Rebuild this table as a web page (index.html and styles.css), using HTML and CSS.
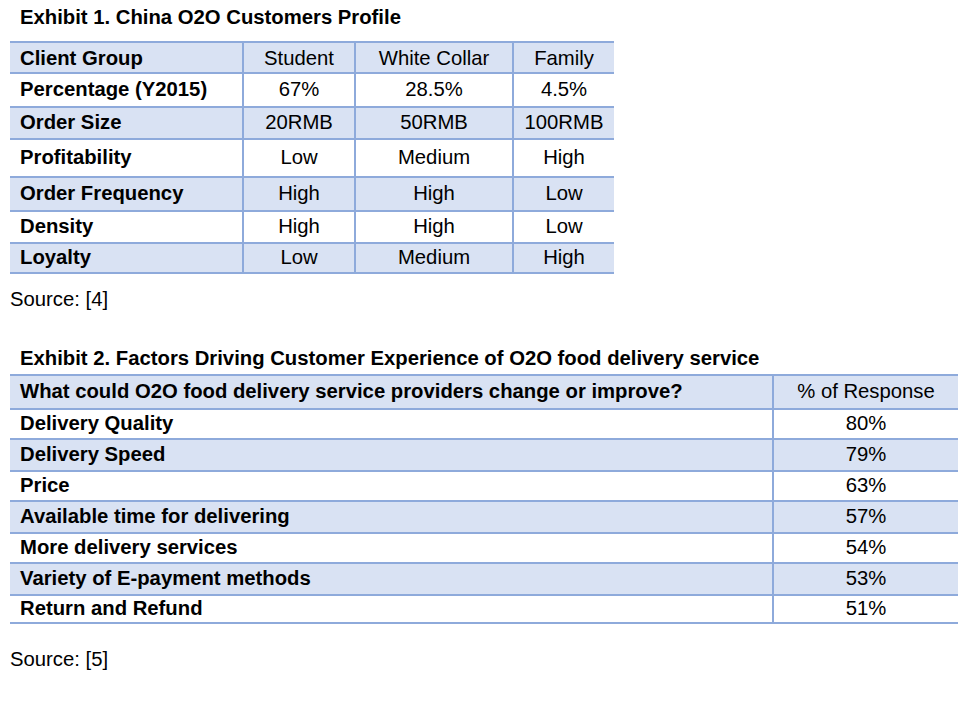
FILE: index.html
```html
<!DOCTYPE html>
<html lang="en">
<head>
<meta charset="utf-8">
<title>China O2O Exhibits</title>
<link rel="stylesheet" href="styles.css">
</head>
<body>
<div class="page">
  <h2 class="exhibit-title t1-title">Exhibit 1. China O2O Customers Profile</h2>
  <table class="grid t1">
    <colgroup>
      <col class="t1-c1"><col class="t1-c2"><col class="t1-c3"><col class="t1-c4">
    </colgroup>
    <tbody>
      <tr class="band h33 first"><th>Client Group</th><td>Student</td><td>White Collar</td><td>Family</td></tr>
      <tr class="h34"><th>Percentage (Y2015)</th><td>67%</td><td>28.5%</td><td>4.5%</td></tr>
      <tr class="band h32"><th>Order Size</th><td>20RMB</td><td>50RMB</td><td>100RMB</td></tr>
      <tr class="h38"><th>Profitability</th><td>Low</td><td>Medium</td><td>High</td></tr>
      <tr class="band h34"><th>Order Frequency</th><td>High</td><td>High</td><td>Low</td></tr>
      <tr class="h32"><th>Density</th><td>High</td><td>High</td><td>Low</td></tr>
      <tr class="band h30"><th>Loyalty</th><td>Low</td><td>Medium</td><td>High</td></tr>
    </tbody>
  </table>
  <p class="source s1">Source: [4]</p>

  <h2 class="exhibit-title t2-title">Exhibit 2. Factors Driving Customer Experience of O2O food delivery service</h2>
  <table class="grid t2">
    <colgroup>
      <col class="t2-c1"><col class="t2-c2">
    </colgroup>
    <tbody>
      <tr class="band h36 first"><th>What could O2O food delivery service providers change or improve?</th><td>% of Response</td></tr>
      <tr class="h30"><th>Delivery Quality</th><td>80%</td></tr>
      <tr class="band h32"><th>Delivery Speed</th><td>79%</td></tr>
      <tr class="h30"><th>Price</th><td>63%</td></tr>
      <tr class="band h32"><th>Available time for delivering</th><td>57%</td></tr>
      <tr class="h30"><th>More delivery services</th><td>54%</td></tr>
      <tr class="band h32"><th>Variety of E-payment methods</th><td>53%</td></tr>
      <tr class="h28"><th>Return and Refund</th><td>51%</td></tr>
    </tbody>
  </table>
  <p class="source s2">Source: [5]</p>
</div>
</body>
</html>
```

FILE: styles.css
```css
html, body {
  margin: 0;
  padding: 0;
  background: #ffffff;
}

body {
  font-family: "Liberation Sans", Arial, Helvetica, sans-serif;
  font-size: 20.3px;
  line-height: 23px;
  color: #000000;
}

.page {
  padding: 6px 0 0 10px;
}

.exhibit-title {
  margin: 0;
  padding-left: 10px;
  font-size: 20.3px;
  line-height: 23px;
  font-weight: bold;
}

.t2-title {
  margin-top: 36px;
}

.grid {
  border-collapse: separate;
  border-spacing: 0;
  table-layout: fixed;
}

.t1 {
  width: 604px;
  margin-top: 12px;
}

.t2 {
  width: 948px;
  margin-top: 4px;
}

.t1-c1 { width: 232px; }
.t1-c2 { width: 112px; }
.t1-c3 { width: 158px; }
.t1-c4 { width: 102px; }

.t2-c1 { width: 762px; }
.t2-c2 { width: 186px; }

.grid th,
.grid td {
  box-sizing: border-box;
  padding: 0 0 2px 0;
  border-bottom: 2px solid #8eaadb;
  vertical-align: middle;
  white-space: nowrap;
  font-size: 20.3px;
  line-height: 23px;
}

.grid th {
  text-align: left;
  font-weight: bold;
  padding-left: 10px;
}

.grid td {
  text-align: center;
  font-weight: normal;
  border-left: 2px solid #8eaadb;
}

.grid tr.first th,
.grid tr.first td {
  border-top: 2px solid #8eaadb;
}

.t1 tr.first th,
.t1 tr.first td {
  padding-bottom: 0;
  padding-top: 1px;
}

.grid tr.band th,
.grid tr.band td {
  background: #d9e2f3;
}

.h28 { height: 28px; }
.h30 { height: 30px; }
.h32 { height: 32px; }
.h33 { height: 33px; }
.h34 { height: 34px; }
.h36 { height: 36px; }
.h38 { height: 38px; }

.source {
  margin: 0;
  font-size: 20.3px;
  line-height: 23px;
}

.s1 {
  margin-top: 14px;
}

.s2 {
  margin-top: 24px;
}
```
